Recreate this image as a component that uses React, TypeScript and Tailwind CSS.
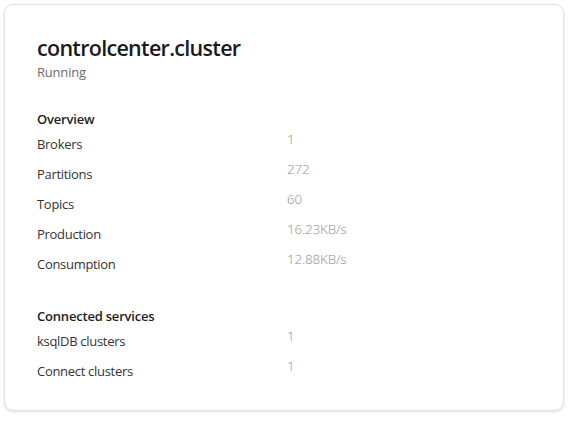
import React from 'react';

interface Stat {
  label: string;
  value: string;
}

const overview: Stat[] = [
  { label: 'Brokers', value: '1' },
  { label: 'Partitions', value: '272' },
  { label: 'Topics', value: '60' },
  { label: 'Production', value: '16.23KB/s' },
  { label: 'Consumption', value: '12.88KB/s' },
];

const services: Stat[] = [
  { label: 'ksqlDB clusters', value: '1' },
  { label: 'Connect clusters', value: '1' },
];

const StatRow: React.FC<{ stat: Stat }> = ({ stat }) => (
  <div className="flex h-[30px] items-start">
    <div className="w-[250px] pt-[6px] text-[13px] leading-[18px] tracking-[-0.3px] text-[#333]">{stat.label}</div>
    <div className="pt-[1px] text-[13.5px] font-light leading-[18px] tracking-[-0.2px] text-[#8f8f8f]">{stat.value}</div>
  </div>
);

export default function App() {
  return (
    <div className="h-[421px] w-[568px] bg-white p-[4px] font-['Open_Sans',sans-serif]">
      <div className="h-[407px] w-[560px] rounded-[9px] border border-[#e2e2e2] bg-white px-[32px] pt-[28px] shadow-[0_1px_3px_rgba(0,0,0,0.12)]">
        <h1 className="text-[21.5px] font-semibold leading-[30px] tracking-[-0.7px] text-[#1b1b1b]">controlcenter.cluster</h1>
        <div className="text-[13px] leading-[18px] tracking-[-0.2px] text-[#6b6b6b]">Running</div>

        <div className="mt-[29px] text-[13px] font-semibold leading-[18px] tracking-[-0.2px] text-[#222]">Overview</div>
        <div className="mt-[1px]">
          {overview.map((s) => (
            <StatRow key={s.label} stat={s} />
          ))}
        </div>

        <div className="mt-[28px] text-[13px] font-semibold leading-[18px] tracking-[-0.2px] text-[#222]">Connected services</div>
        <div className="mt-[1px]">
          {services.map((s) => (
            <StatRow key={s.label} stat={s} />
          ))}
        </div>
      </div>
    </div>
  );
}
